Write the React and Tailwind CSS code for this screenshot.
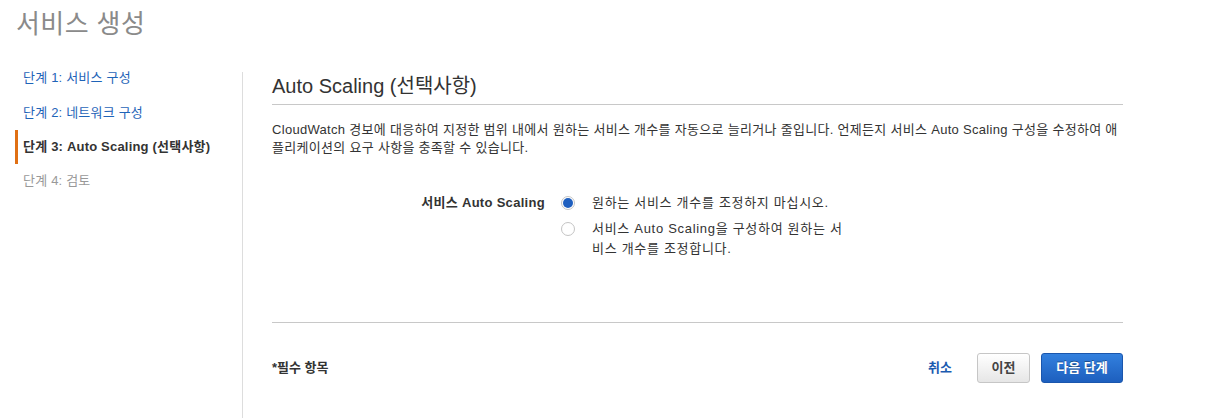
import React from 'react';

const font = { fontFamily: '"Liberation Sans", "Noto Sans CJK KR", sans-serif' };

const steps = [
  { label: '단계 1: 서비스 구성', state: 'done' },
  { label: '단계 2: 네트워크 구성', state: 'done' },
  { label: '단계 3: Auto Scaling (선택사항)', state: 'active' },
  { label: '단계 4: 검토', state: 'todo' },
];

const Radio = ({ checked }) => (
  <span className="mt-[3px] flex h-[14px] w-[14px] shrink-0 items-center justify-center rounded-full border border-[#c4c4c4] bg-white">
    {checked && <span className="h-[10px] w-[10px] rounded-full bg-[#1f5fbf]"></span>}
  </span>
);

const App = () => {
  return (
    <div className="h-[418px] w-[1212px] overflow-hidden bg-white text-[#333]" style={font}>
      {/* Page title */}
      <h1 className="h-[60px] pl-[16px] pt-[7px] text-[26px] leading-[34px] tracking-[0.4px] text-[#8a8a8a]">서비스 생성</h1>

      <div className="flex">
        {/* Steps */}
        <nav className="w-[242px] pl-[15px] pt-[1px]">
          {steps.map((s) => (
            <div
              key={s.label}
              className={
                'flex h-[34.3px] items-center border-l-[3px] pl-[5px] text-[13px] tracking-[0.2px] ' +
                (s.state === 'active'
                  ? 'border-[#e07014] font-bold text-[#333]'
                  : s.state === 'done'
                  ? 'border-transparent text-[#1f64b8]'
                  : 'border-transparent text-[#999]')
              }
            >
              {s.label}
            </div>
          ))}
        </nav>

        {/* Main */}
        <main className="mt-[12px] h-[346px] w-[880px] border-l border-[#dddddd] pl-[29px]">
          <div className="flex h-[346px] w-[851px] flex-col">
            <h2 className="border-b border-[#c8c8c8] pb-[4px] text-[20px] leading-[28px] text-[#333]">
              Auto Scaling (선택사항)
            </h2>
            <p className="mt-[16px] text-[13px] leading-[18px] tracking-[0.3px] text-[#333]">
              CloudWatch 경보에 대응하여 지정한 범위 내에서 원하는 서비스 개수를 자동으로 늘리거나 줄입니다. 언제든지 서비스 Auto Scaling 구성을 수정하여 애플리케이션의 요구 사항을 충족할 수 있습니다.
            </p>

            {/* Form row */}
            <div className="mt-[36px] flex text-[13px] leading-[20px]">
              <div className="w-[273px] text-right font-bold tracking-[0.3px] text-[#333]">서비스 Auto Scaling</div>
              <div className="ml-[16px] flex flex-col gap-[6px] tracking-[0.7px]">
                <label className="flex gap-[17px]">
                  <Radio checked />
                  <span className="w-[252px]">원하는 서비스 개수를 조정하지 마십시오.</span>
                </label>
                <label className="flex gap-[17px]">
                  <Radio />
                  <span className="w-[252px]">서비스 Auto Scaling을 구성하여 원하는 서비스 개수를 조정합니다.</span>
                </label>
              </div>
            </div>

            {/* Footer */}
            <div className="mt-auto border-t border-[#c8c8c8]">
              <div className="mt-[30px] mb-[35px] flex h-[30px] items-center justify-between text-[13px]">
                <span className="font-bold text-[#333]">*필수 항목</span>
                <div className="flex items-center">
                  <a href="#" className="mr-[25px] font-bold text-[#1b5bb0]">취소</a>
                  <button className="h-[30px] w-[53px] rounded-[3px] border border-[#c6c6c6] bg-gradient-to-b from-[#ffffff] to-[#e6e6e6] font-bold text-[#444]">
                    이전
                  </button>
                  <button className="ml-[11px] h-[30px] w-[82px] rounded-[3px] border border-[#1a56ad] bg-gradient-to-b from-[#3380de] to-[#1d5fbe] font-bold text-white [text-shadow:0_-1px_0_rgba(0,0,0,0.35)]">
                    다음 단계
                  </button>
                </div>
              </div>
            </div>
          </div>
        </main>
      </div>
    </div>
  );
};

export default App;
